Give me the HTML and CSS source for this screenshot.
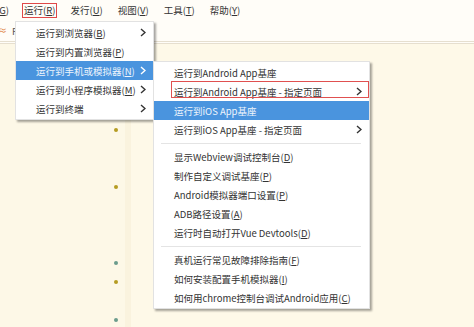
FILE: index.html
```html
<!DOCTYPE html>
<html lang="zh-CN">
<head>
    <meta charset="UTF-8">
    <title>运行菜单</title>
    <link rel="stylesheet" href="styles.css">
</head>
<body>
    <div class="window">
        <div class="menubar">
            <span class="menu-title cut">(<u>G</u>)</span>
            <span class="menu-title marked">运行(<u>R</u>)</span>
            <span class="menu-title">发行(<u>U</u>)</span>
            <span class="menu-title">视图(<u>V</u>)</span>
            <span class="menu-title">工具(<u>T</u>)</span>
            <span class="menu-title">帮助(<u>Y</u>)</span>
        </div>
        <div class="tabbar">
            <span class="tab-icon">≈</span>
            <span class="tab-name">F</span>
        </div>
        <div class="editor">
            <div class="gutter">
                <div class="line"></div><div class="line"></div><div class="line"></div><div class="line"></div>
                <div class="line"><i class="dot olive"></i></div>
                <div class="line"></div><div class="line"></div>
                <div class="line"><i class="dot olive"></i></div>
                <div class="line"></div><div class="line"></div><div class="line"></div>
                <div class="line"><i class="dot teal"></i></div>
                <div class="line"><i class="dot olive"></i></div>
                <div class="line"></div>
                <div class="line"><i class="dot teal"></i></div>
            </div>
            <div class="code"></div>
        </div>

        <div class="menu main-menu">
            <div class="item"><span>运行到浏览器(<u>B</u>)</span><svg class="arrow" viewBox="0 0 6 9"><path d="M1 1l4 3.5L1 8"/></svg></div>
            <div class="item"><span>运行到内置浏览器(<u>P</u>)</span></div>
            <div class="item active"><span>运行到手机或模拟器(<u>N</u>)</span><svg class="arrow" viewBox="0 0 6 9"><path d="M1 1l4 3.5L1 8"/></svg></div>
            <div class="item"><span>运行到小程序模拟器(<u>M</u>)</span><svg class="arrow" viewBox="0 0 6 9"><path d="M1 1l4 3.5L1 8"/></svg></div>
            <div class="item"><span>运行到终端</span><svg class="arrow" viewBox="0 0 6 9"><path d="M1 1l4 3.5L1 8"/></svg></div>
        </div>

        <div class="menu sub-menu">
            <div class="item"><span>运行到Android App基座</span></div>
            <div class="item marked-item"><span>运行到Android App基座 - 指定页面</span><svg class="arrow" viewBox="0 0 6 9"><path d="M1 1l4 3.5L1 8"/></svg></div>
            <div class="item active"><span>运行到iOS App基座</span></div>
            <div class="item"><span>运行到iOS App基座 - 指定页面</span><svg class="arrow" viewBox="0 0 6 9"><path d="M1 1l4 3.5L1 8"/></svg></div>
            <div class="sep"></div>
            <div class="item"><span>显示Webview调试控制台(<u>D</u>)</span></div>
            <div class="item"><span>制作自定义调试基座(<u>P</u>)</span></div>
            <div class="item"><span>Android模拟器端口设置(<u>P</u>)</span></div>
            <div class="item"><span>ADB路径设置(<u>A</u>)</span></div>
            <div class="item"><span>运行时自动打开Vue Devtools(<u>D</u>)</span></div>
            <div class="sep"></div>
            <div class="item"><span>真机运行常见故障排除指南(<u>F</u>)</span></div>
            <div class="item"><span>如何安装配置手机模拟器(<u>I</u>)</span></div>
            <div class="item"><span>如何用chrome控制台调试Android应用(<u>C</u>)</span></div>
        </div>
    </div>
</body>
</html>
```

FILE: styles.css
```css
body {
    margin: 0;
    padding: 0;
    font-family: "Noto Sans CJK SC", "Noto Sans", sans-serif;
    font-size: 9.5px;
    color: #333;
}
.window {
    position: relative;
    width: 474px;
    height: 327px;
    overflow: hidden;
    background: #fdf8e7;
}
.menubar {
    display: flex;
    height: 20px;
    align-items: center;
    gap: 11px;
    background: #fffdf8;
    margin-left: -6px;
}
.menu-title {
    line-height: 13px;
    padding: 0 1px;
    border: 1px solid transparent;
}
.menu-title.marked {
    border-color: #e04848;
}
.tabbar {
    display: flex;
    align-items: center;
    gap: 5px;
    height: 21px;
    background: #fffdf8;
    border-bottom: 3px double #e6dfcf;
}
.tab-icon {
    color: #e08040;
    margin-left: -2px;
    font-size: 9px;
}
.tab-name {
    color: #555;
}
.editor {
    display: flex;
    height: 283px;
}
.gutter {
    width: 125px;
    padding-top: 0;
    border-right: 6px solid #faf3de;
    box-shadow: 1px 0 0 #ebe3cb;
}
.line {
    height: 19px;
    display: flex;
    align-items: center;
    justify-content: flex-end;
    padding-right: 7px;
}
.dot {
    width: 4px;
    height: 4px;
    border-radius: 50%;
}
.dot.olive {
    background: #b59c22;
}
.dot.teal {
    background: #6b9c8c;
}
.code {
    flex: 1;
    background: #fef9e8;
}
.menu {
    position: absolute;
    background: #fff;
    border: 1px solid #e2e2e2;
    box-shadow: 2px 2px 2px rgba(0, 0, 0, 0.35);
    padding: 1px 0;
}
.main-menu {
    left: 15px;
    top: 21px;
    width: 137px;
}
.sub-menu {
    left: 153px;
    top: 61px;
    width: 215px;
}
.item {
    position: relative;
    display: flex;
    align-items: center;
    justify-content: space-between;
    height: 19px;
    padding: 0 7px 0 20px;
}
.item.active {
    background: #4a94de;
    color: #eef5fc;
}
.item.active .arrow path {
    stroke: #fff;
}
.marked-item::after {
    content: "";
    position: absolute;
    left: 17px;
    right: 0;
    top: -1px;
    bottom: 3px;
    border: 1px solid #e05050;
}
.arrow {
    width: 6px;
    height: 9px;
}
.arrow path {
    fill: none;
    stroke: #333;
    stroke-width: 1.4;
}
.sep {
    height: 1px;
    background: #e4e4e4;
    margin: 4px 8px 3px 7px;
}
u {
    text-underline-offset: 1px;
}
```
